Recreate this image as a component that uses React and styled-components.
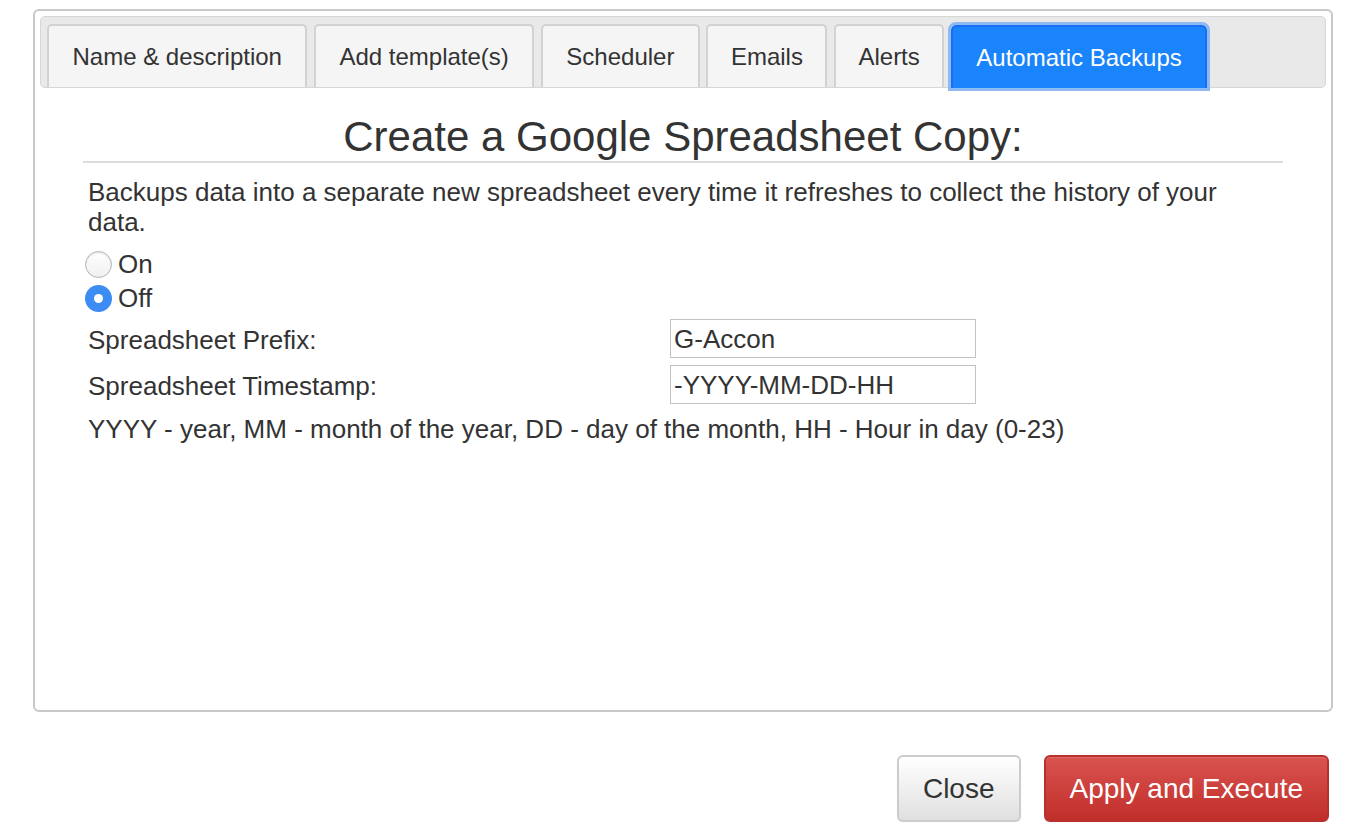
import styled, { createGlobalStyle } from "styled-components";

const GlobalStyle = createGlobalStyle`
  body {
    margin: 0;
    background: #ffffff;
    font-family: "Liberation Sans", Arial, sans-serif;
    color: #333333;
  }
`;

const Page = styled.div`
  padding: 9px 37px 0 33px;
  width: 1370px;
  box-sizing: border-box;
`;

const Panel = styled.div`
  height: 703px;
  box-sizing: border-box;
  border: 2px solid #c8c8c8;
  border-radius: 6px;
  padding: 5px;
  display: flex;
  flex-direction: column;
`;

const TabBar = styled.div`
  height: 72px;
  box-sizing: border-box;
  background: #e9e9e9;
  border: 1px solid #d6d6d6;
  border-radius: 5px;
  padding: 8px 6px 0;
  display: flex;
  align-items: flex-end;
  gap: 6.5px;
`;

const Tab = styled.div`
  height: 63px;
  box-sizing: border-box;
  padding: 0 ${(p) => (p.$tight ? "22.5px" : "23.5px")};
  display: flex;
  align-items: center;
  font-size: 24px;
  border-radius: 5px 5px 0 0;
  border: 2px solid ${(p) => (p.$active ? "#1a6ff0" : "#d2d2d2")};
  border-bottom: none;
  background: ${(p) => (p.$active ? "#1984fb" : "#f5f5f5")};
  color: ${(p) => (p.$active ? "#ffffff" : "#333333")};
  position: relative;
  top: ${(p) => (p.$active ? "1px" : "0")};
  outline: ${(p) => (p.$active ? "3px solid #8db9f4" : "none")};
`;

const Content = styled.div`
  padding: 25px 43px 0;
`;

const Heading = styled.h1`
  margin: 0;
  font-weight: normal;
  font-size: 42px;
  line-height: 48px;
  text-align: center;
  border-bottom: 2px solid #dddddd;
`;

const Body = styled.div`
  padding: 14px 5px 0;
  width: 1160px;
`;

const Text = styled.p`
  margin: 0;
  font-size: 26px;
  line-height: 30px;
`;

const Radios = styled.div`
  margin-top: 10px;
  margin-left: -3px;
  display: flex;
  flex-direction: column;
`;

const RadioRow = styled.label`
  display: flex;
  align-items: center;
  gap: 6px;
  height: 34px;
  font-size: 26px;
`;

const Radio = styled.input`
  appearance: none;
  margin: 0;
  width: 27px;
  height: 27px;
  border-radius: 50%;
  box-sizing: border-box;
  border: 1px solid #b5b5b5;
  background: linear-gradient(#ffffff, #f0f0f0);
  box-shadow: inset 0 1px 2px rgba(0, 0, 0, 0.12);
  display: grid;
  place-items: center;

  &:checked {
    border: none;
    background: #3c8cf4;
    box-shadow: none;
  }

  &:checked::after {
    content: "";
    width: 9px;
    height: 9px;
    border-radius: 50%;
    background: #ffffff;
  }
`;

const Form = styled.div`
  margin-top: 4px;
  display: grid;
  grid-template-columns: 582px 306px;
  row-gap: 7px;
  align-items: center;
`;

const Label = styled.div`
  font-size: 26px;
  padding-top: 3px;
`;

const Field = styled.input`
  height: 39px;
  box-sizing: border-box;
  border: 1px solid #c2c2c2;
  padding: 2px 3px 0;
  font-family: "Liberation Sans", Arial, sans-serif;
  font-size: 26px;
  color: #333333;
  outline: none;
`;

const Hint = styled(Text)`
  margin-top: 10px;
`;

const Footer = styled.div`
  display: flex;
  justify-content: flex-end;
  gap: 23px;
  padding: 43px 4px 0 0;
`;

const Button = styled.button`
  height: 67px;
  padding: 0 24px;
  border-radius: 6px;
  font-family: "Liberation Sans", Arial, sans-serif;
  font-size: 28px;
  cursor: pointer;
  border: 2px solid ${(p) => (p.$danger ? "#b8302c" : "#cccccc")};
  color: ${(p) => (p.$danger ? "#ffffff" : "#333333")};
  background: ${(p) =>
    p.$danger
      ? "linear-gradient(#d9534f, #c12e2a)"
      : "linear-gradient(#ffffff, #e0e0e0)"};
  box-shadow: inset 0 1px 0 rgba(255, 255, 255, 0.15), 0 1px 1px rgba(0, 0, 0, 0.08);
`;

const tabs = [
  { label: "Name & description" },
  { label: "Add template(s)" },
  { label: "Scheduler" },
  { label: "Emails", tight: true },
  { label: "Alerts", tight: true },
  { label: "Automatic Backups", active: true },
];

function App() {
  return (
    <Page>
      <GlobalStyle />
      <Panel>
        <TabBar>
          {tabs.map((t) => (
            <Tab key={t.label} $active={t.active} $tight={t.tight}>
              {t.label}
            </Tab>
          ))}
        </TabBar>
        <Content>
          <Heading>Create a Google Spreadsheet Copy:</Heading>
          <Body>
            <Text>
              Backups data into a separate new spreadsheet every time it
              refreshes to collect the history of your data.
            </Text>
            <Radios>
              <RadioRow>
                <Radio type="radio" name="backup" value="on" />
                On
              </RadioRow>
              <RadioRow>
                <Radio type="radio" name="backup" value="off" defaultChecked />
                Off
              </RadioRow>
            </Radios>
            <Form>
              <Label>Spreadsheet Prefix:</Label>
              <Field defaultValue="G-Accon" />
              <Label>Spreadsheet Timestamp:</Label>
              <Field defaultValue="-YYYY-MM-DD-HH" />
            </Form>
            <Hint>
              YYYY - year, MM - month of the year, DD - day of the month, HH -
              Hour in day (0-23)
            </Hint>
          </Body>
        </Content>
      </Panel>
      <Footer>
        <Button>Close</Button>
        <Button $danger>Apply and Execute</Button>
      </Footer>
    </Page>
  );
}

export default App;
